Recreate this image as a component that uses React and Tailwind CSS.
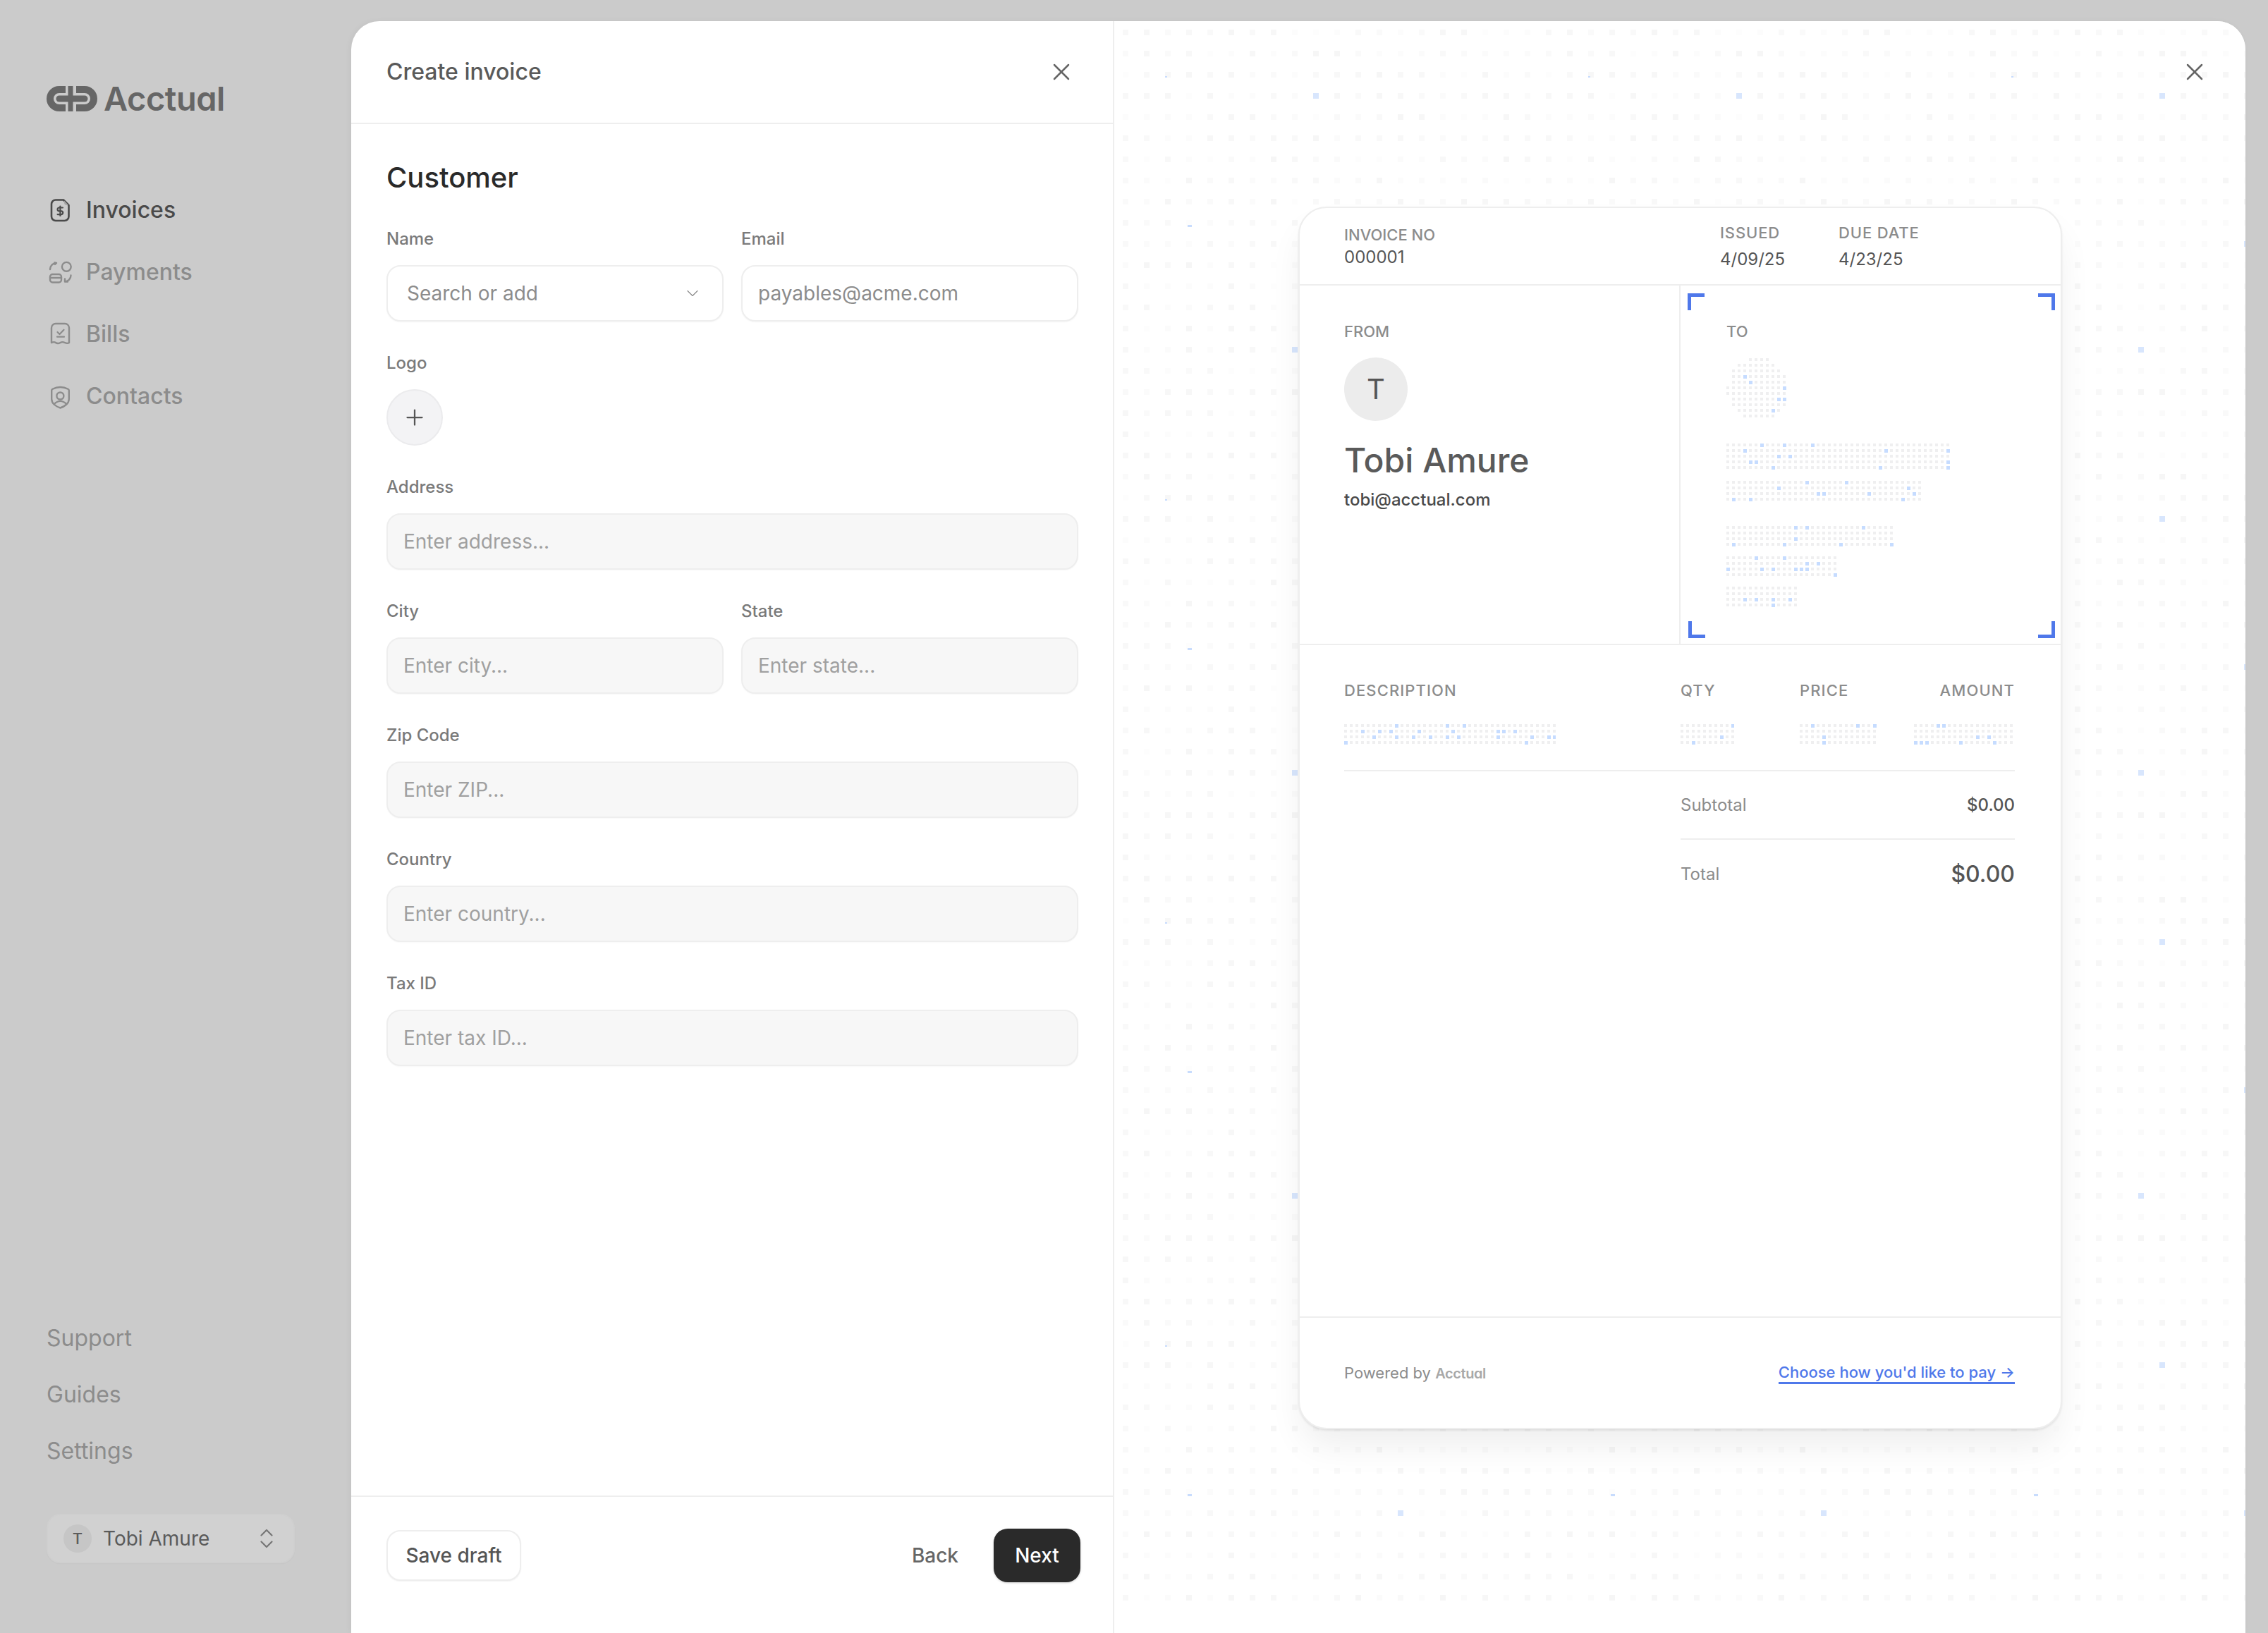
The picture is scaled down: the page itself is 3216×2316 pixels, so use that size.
import React from "react";
import { X, Plus, ChevronDown, ChevronsUpDown } from "lucide-react";

function rng(seed) {
  let s = seed >>> 0;
  return () => {
    s = (s * 1664525 + 1013904223) >>> 0;
    return s / 4294967296;
  };
}

function Skeleton({ w, h, circle = false, seed = 1 }) {
  const r = rng(seed * 7919 + w * 31 + h);
  const cols = Math.ceil(w / 8);
  const rows = Math.ceil(h / 8);
  const dots = [];
  for (let j = 0; j < rows; j++) {
    for (let i = 0; i < cols; i++) {
      const x = i * 8;
      const y = j * 8 + 1;
      const blue = r() < 0.085;
      if (circle) {
        const d = Math.hypot(x + 2 - w / 2, y + 2 - h / 2);
        if (d > w / 2 - 1) continue;
      }
      dots.push(<rect key={`${i}-${j}`} x={x} y={y} width={blue ? 5 : 4} height={blue ? 5 : 4} fill={blue ? "#c6dcff" : "#efeff0"} />);
    }
  }
  return (
    <svg width={w} height={h} className="block shrink-0">
      {dots}
    </svg>
  );
}

function PagePattern() {
  const r = rng(42);
  const cells = [];
  const strong = { "9-3": 1, "8-15": 1, "13-10": 1 };
  for (let j = 0; j < 20; j++) {
    for (let i = 0; i < 20; i++) {
      const v = Math.round(246 + r() * 7);
      const fill = strong[`${i}-${j}`] ? "#d8e6fd" : `rgb(${v},${v},${v})`;
      cells.push(<rect key={`${i}-${j}`} x={i * 30} y={j * 30} width="8" height="8" fill={fill} />);
    }
  }
  return (
    <svg className="absolute left-0 top-0" width="1604" height="2240">
      <defs>
        <pattern id="page-dots" x="12" y="12" width="600" height="600" patternUnits="userSpaceOnUse">
          {cells}
          <rect x="60" y="66" width="3" height="2" fill="#c8dcfd" />
          <rect x="92" y="277" width="6" height="3" fill="#c8dcfd" />
        </pattern>
      </defs>
      <rect width="1604" height="2240" fill="url(#page-dots)" />
    </svg>
  );
}

function LogoMark() {
  return (
    <svg width="72" height="36" viewBox="0 0 72 36" fill="none" stroke="#666666" className="block shrink-0">
      <path d="M27 5H18A13 13 0 0 0 18 31H27" strokeWidth="10" />
      <path d="M34 0V36" strokeWidth="7" />
      <path d="M18 18H54" strokeWidth="9" strokeLinecap="round" />
      <path d="M42 5H54A13 13 0 0 1 54 31H42" strokeWidth="10" />
    </svg>
  );
}

function IconInvoice() {
  return (
    <svg width="36" height="36" viewBox="0 0 36 36" fill="none" stroke="currentColor" strokeWidth="2.6" strokeLinecap="round" strokeLinejoin="round">
      <path d="M12 3.500H23L30.500 11V27a6 6 0 0 1-6 6H12a6 6 0 0 1-6-6V9.500a6 6 0 0 1 6-6Z" />
      <path d="M24 4.500v2.500a4 4 0 0 0 4 4h2z" fill="#a6a6a6" stroke="none" />
      <path d="M22 14.500h-5a2.400 2.400 0 0 0 0 4.800h2.800a2.400 2.400 0 0 1 0 4.800H14.600M18.400 12.500v13.500" strokeWidth="2.200" />
    </svg>
  );
}

function IconPayments() {
  return (
    <svg width="36" height="36" viewBox="0 0 36 36" fill="none" stroke="currentColor" strokeWidth="2.4" strokeLinecap="round" strokeLinejoin="round">
      <rect x="4" y="21" width="16" height="11.500" rx="3.500" />
      <path d="M4 26h16" />
      <circle cx="27.300" cy="10.300" r="6.400" />
      <path d="M4 14a9 9 0 0 1 9-9M13 5l-2.500-.5M13 5l-2 2" />
      <path d="M33.500 22.500a9 9 0 0 1-8.500 9M25 31.500v-4M25 31.500h4" />
    </svg>
  );
}

function IconBills() {
  return (
    <svg width="36" height="36" viewBox="0 0 36 36" fill="none" stroke="currentColor" strokeWidth="2.4" strokeLinecap="round" strokeLinejoin="round">
      <path d="M6 30V9a6 6 0 0 1 6-6h13a6 6 0 0 1 6 6v21c-2 1.500-4 1-6 0s-4-1.500-6.500 0-4.500 1.500-6.500 0-4-1-6 0Z" />
      <path d="M14.500 15l3 3 6-6.300M14 21.700h10" strokeWidth="2.200" />
    </svg>
  );
}

function IconContacts() {
  return (
    <svg width="36" height="36" viewBox="0 0 36 36" fill="none" stroke="currentColor" strokeWidth="2.4" strokeLinecap="round" strokeLinejoin="round">
      <path d="M18.500 5c4 0 8 1.200 11 2.800.8.400 1.300 1.200 1.300 2V22c0 6-6 10.500-12.300 12.500C12 32.500 6.200 28 6.200 22V9.800c0-.8.500-1.600 1.300-2C10.500 6.200 14.500 5 18.500 5Z" />
      <circle cx="18.400" cy="17.500" r="5" />
      <path d="M10 29c5-5.500 12-5.500 17 0" />
    </svg>
  );
}

function NavItem({ icon, label, active }) {
  return (
    <div className={`flex h-[88px] items-center gap-[19px] text-[32px] font-medium ${active ? "text-[#4a4a4a]" : "text-[#8c8c8c]"}`}>
      <span className="ml-px flex shrink-0">{icon}</span>
      <span>{label}</span>
    </div>
  );
}

function Field({ label, placeholder }) {
  return (
    <label className="block min-w-0">
      <span className="mb-[19px] block h-[36px] text-[24px] font-medium leading-[36px] text-[#7a7a7a]">{label}</span>
      <input
        readOnly
        placeholder={placeholder}
        className="block h-[80px] w-full rounded-[20px] border-2 border-[#eeeeee] bg-[#f7f7f7] px-[22px] text-[28px] text-[#555555] shadow-[0_1px_2px_rgba(0,0,0,0.03)] outline-none placeholder:text-[#a0a0a0]"
      />
    </label>
  );
}

function Corner({ className }) {
  return <span className={`absolute h-[24px] w-[24px] border-[#4f78ea] ${className}`} />;
}

const colLabel = "text-[22px] font-medium uppercase leading-[36px] text-[#8c8c8c]";

export default function App() {
  return (
    <div className="flex h-[2316px] w-[3216px] overflow-hidden bg-[#cbcbcb] font-[Inter,sans-serif]">
      <aside className="flex w-[498px] shrink-0 flex-col pb-[99px] pl-[66px] pr-[80px] pt-[122px]">
        <div className="flex h-[36px] items-center gap-[9px]">
          <LogoMark />
          <span className="text-[47px] font-semibold leading-[36px] tracking-[-0.01em] text-[#666666] [font-feature-settings:'cv11']">Acctual</span>
        </div>
        <nav className="mt-[96px]">
          <NavItem active icon={<IconInvoice />} label="Invoices" />
          <NavItem icon={<IconPayments />} label="Payments" />
          <NavItem icon={<IconBills />} label="Bills" />
          <NavItem icon={<IconContacts />} label="Contacts" />
        </nav>
        <div className="mt-auto text-[32px] text-[#8c8c8c]">
          <div className="flex h-[80px] items-center">Support</div>
          <div className="flex h-[80px] items-center">Guides</div>
          <div className="flex h-[80px] items-center">Settings</div>
        </div>
        <div className="mt-[49px] flex h-[70px] items-center rounded-[20px] border-2 border-[#cfcfcf] bg-[#d1d1d1] pl-[22px] pr-[20px] shadow-[0_1px_2px_rgba(0,0,0,0.03)]">
          <span className="flex h-[40px] w-[40px] shrink-0 items-center justify-center rounded-full bg-[#c6c6c6] text-[22px] font-medium text-[#5c5c5c]">T</span>
          <span className="ml-[16px] flex-1 text-[28px] text-[#5a5a5a]">Tobi Amure</span>
          <ChevronsUpDown size={36} strokeWidth={1.5} className="text-[#777777]" />
        </div>
      </aside>

      <main className="mt-[30px] flex h-[2286px] w-[2686px] shrink-0 overflow-hidden rounded-t-[40px] bg-white shadow-[-2px_0_8px_rgba(0,0,0,0.04)]">
        <section className="flex w-[1082px] shrink-0 flex-col border-r-2 border-[#eeeeee]">
          <header className="flex h-[146px] shrink-0 items-center justify-between border-b-2 border-[#eeeeee] pl-[50px] pr-[53px]">
            <h1 className="text-[32px] font-medium text-[#5a5a5a]">Create invoice</h1>
            <X size={40} strokeWidth={1.5} className="text-[#666666]" />
          </header>

          <div className="flex-1 pl-[50px] pr-[49px] pt-[46px]">
            <h2 className="h-[60px] text-[40px] font-medium leading-[60px] text-[#2a2a2a]">Customer</h2>
            <div className="mt-[39px] flex flex-col gap-[41px]">
              <div className="grid grid-cols-2 gap-x-[25px]">
                <div>
                  <span className="mb-[19px] block h-[36px] text-[24px] font-medium leading-[36px] text-[#7a7a7a]">Name</span>
                  <div className="flex h-[80px] items-center justify-between rounded-[20px] border-2 border-[#eeeeee] bg-white pl-[27px] pr-[28px] text-[28px] text-[#8c8c8c] shadow-[0_1px_2px_rgba(0,0,0,0.04)]">
                    <span>Search or add</span>
                    <ChevronDown size={28} strokeWidth={1} className="text-[#888888]" />
                  </div>
                </div>
                <label className="block">
                  <span className="mb-[19px] block h-[36px] text-[24px] font-medium leading-[36px] text-[#7a7a7a]">Email</span>
                  <input
                    readOnly
                    placeholder="payables@acme.com"
                    className="block h-[80px] w-full rounded-[20px] border-2 border-[#eeeeee] bg-white px-[22px] text-[28px] shadow-[0_1px_2px_rgba(0,0,0,0.04)] outline-none placeholder:text-[#8c8c8c]"
                  />
                </label>
              </div>
              <div>
                <span className="mb-[19px] block h-[36px] text-[24px] font-medium leading-[36px] text-[#7a7a7a]">Logo</span>
                <div className="flex h-[80px] w-[80px] items-center justify-center rounded-full border-2 border-[#ebebed] bg-[#f3f3f5]">
                  <Plus size={36} strokeWidth={1.5} className="text-[#555555]" />
                </div>
              </div>
              <Field label="Address" placeholder="Enter address..." />
              <div className="grid grid-cols-2 gap-x-[25px]">
                <Field label="City" placeholder="Enter city..." />
                <Field label="State" placeholder="Enter state..." />
              </div>
              <Field label="Zip Code" placeholder="Enter ZIP..." />
              <Field label="Country" placeholder="Enter country..." />
              <Field label="Tax ID" placeholder="Enter tax ID..." />
            </div>
          </div>

          <footer className="flex h-[195px] shrink-0 items-start justify-between border-t-2 border-[#eeeeee] pl-[50px] pr-[46px] pt-[45px]">
            <button className="mt-[2px] flex h-[72px] w-[191px] items-center justify-center rounded-[20px] border-2 border-[#eeeeee] bg-white text-[28px] font-medium text-[#555555] shadow-[0_1px_2px_rgba(0,0,0,0.05)]">
              Save draft
            </button>
            <div className="flex items-center gap-[50px]">
              <button className="text-[28px] font-medium text-[#666666]">Back</button>
              <button className="flex h-[76px] w-[123px] items-center justify-center rounded-[20px] bg-[#2a2a2a] text-[28px] font-medium text-white shadow-[0_1px_3px_rgba(0,0,0,0.2)]">
                Next
              </button>
            </div>
          </footer>
        </section>

        <section className="relative min-w-0 flex-1 bg-white">
          <PagePattern />
          <X size={40} strokeWidth={1.5} className="absolute right-[52px] top-[52px] text-[#666666]" />

          <div className="relative ml-[261px] mt-[263px] flex h-[1734px] w-[1083px] flex-col rounded-[40px] border-2 border-[#eeeeee] bg-white shadow-[0_28px_50px_-6px_rgba(0,0,0,0.07),0_2px_3px_rgba(0,0,0,0.08)]">
            <div className="flex h-[110px] shrink-0 border-b-2 border-[#eeeeee] pb-[2px] text-[24px] text-[#555555]">
              <div className="flex w-[540px] flex-col justify-center pl-[63px]">
                <span className={`${colLabel} h-[33px] leading-[33px]`}>INVOICE NO</span>
                <span className="h-[33px] leading-[33px]">000001</span>
              </div>
              <div className="flex w-[168px] flex-col justify-center pl-[56px] pt-[2px]">
                <span className={`${colLabel} h-[36px] tracking-[0.04em]`}>ISSUED</span>
                <span className="mt-[2px] h-[36px] leading-[36px]">4/09/25</span>
              </div>
              <div className="flex flex-col justify-center pl-[56px] pt-[2px]">
                <span className={`${colLabel} h-[36px] tracking-[0.04em]`}>DUE DATE</span>
                <span className="mt-[2px] h-[36px] leading-[36px]">4/23/25</span>
              </div>
            </div>

            <div className="flex h-[510px] shrink-0 border-b-2 border-[#eeeeee]">
              <div className="w-[540px] shrink-0 border-r-2 border-[#eeeeee] pl-[63px] pt-[47px]">
                <div className={colLabel}>FROM</div>
                <div className="mt-[19px] flex h-[90px] w-[90px] items-center justify-center rounded-full bg-[#ececec] text-[40px] text-[#555555]">T</div>
                <div className="mt-[26px] h-[60px] text-[48px] font-medium leading-[60px] text-[#5a5a5a]">Tobi Amure</div>
                <div className="mt-[8px] h-[36px] text-[24px] font-medium leading-[36px] text-[#4a4a4a]">tobi@acctual.com</div>
              </div>
              <div className="relative flex-1 pl-[65px] pt-[47px]">
                <Corner className="left-[10px] top-[11px] border-l-[5px] border-t-[5px]" />
                <Corner className="right-[8px] top-[11px] border-r-[5px] border-t-[5px]" />
                <Corner className="bottom-[8px] left-[11px] border-b-[5px] border-l-[5px]" />
                <Corner className="bottom-[8px] right-[8px] border-b-[5px] border-r-[5px]" />
                <div className={colLabel}>TO</div>
                <div className="mt-[19px]"><Skeleton w={90} h={90} circle seed={2} /></div>
                <div className="mt-[31px]"><Skeleton w={318} h={38} seed={3} /></div>
                <div className="mt-[15px]"><Skeleton w={278} h={30} seed={4} /></div>
                <div className="mt-[34px]"><Skeleton w={238} h={30} seed={5} /></div>
                <div className="mt-[13px]"><Skeleton w={158} h={30} seed={6} /></div>
                <div className="mt-[13px]"><Skeleton w={102} h={30} seed={7} /></div>
              </div>
            </div>

            <div className="pl-[63px] pr-[65px] pt-[46px]">
              <div className="grid grid-cols-[477px_169px_162px_143px]">
                <span className={`${colLabel} tracking-[0.05em]`}>DESCRIPTION</span>
                <span className={`${colLabel} tracking-[0.05em]`}>QTY</span>
                <span className={`${colLabel} tracking-[0.05em]`}>PRICE</span>
                <span className={`${colLabel} text-right tracking-[0.05em]`}>AMOUNT</span>
              </div>
              <div className="mt-[29px] grid grid-cols-[477px_169px_162px_143px] border-b-2 border-[#eeeeee] pb-[36px]">
                <Skeleton w={300} h={30} seed={8} />
                <Skeleton w={76} h={30} seed={9} />
                <Skeleton w={109} h={30} seed={10} />
                <Skeleton w={143} h={30} seed={11} />
              </div>
              <div className="ml-[477px]">
                <div className="flex h-[97px] items-center justify-between border-b-2 border-[#eeeeee]">
                  <span className="text-[24px] text-[#8c8c8c]">Subtotal</span>
                  <span className="text-[24px] font-medium text-[#555555]">$0.00</span>
                </div>
                <div className="flex h-[98px] items-center justify-between">
                  <span className="text-[24px] text-[#8c8c8c]">Total</span>
                  <span className="text-[32px] font-medium text-[#555555]">$0.00</span>
                </div>
              </div>
            </div>

            <div className="mt-auto flex h-[158px] shrink-0 items-center justify-between border-t-2 border-[#eeeeee] pl-[63px] pr-[65px]">
              <span className="text-[22px] text-[#8c8c8c]">
                Powered by <span className="text-[20px] font-semibold tracking-[-0.02em] text-[#a8a8a8] [font-feature-settings:'cv11']">Acctual</span>
              </span>
              <a className="border-b-[3px] border-[#4f78ea] text-[22px] font-medium leading-[28px] text-[#4f78ea]">Choose how you'd like to pay →</a>
            </div>
          </div>
        </section>
      </main>
    </div>
  );
}
